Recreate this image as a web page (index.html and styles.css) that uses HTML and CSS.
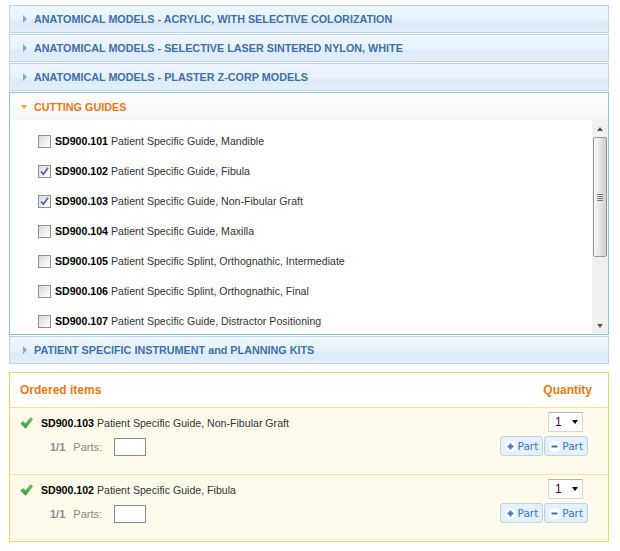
FILE: index.html
```html
<!DOCTYPE html>
<html>
<head>
<meta charset="utf-8">
<link rel="stylesheet" href="styles.css">
</head>
<body>
<div class="wrap">
  <div class="acc-h"><span class="tri-r"></span><span>ANATOMICAL MODELS - ACRYLIC, WITH SELECTIVE COLORIZATION</span></div>
  <div class="acc-h"><span class="tri-r"></span><span>ANATOMICAL MODELS - SELECTIVE LASER SINTERED NYLON, WHITE</span></div>
  <div class="acc-h"><span class="tri-r"></span><span>ANATOMICAL MODELS - PLASTER Z-CORP MODELS</span></div>
  <div class="panel">
    <div class="panel-h"><span class="tri-d"></span><span>CUTTING GUIDES</span></div>
    <div class="panel-b">
      <ul class="list">
        <li><span class="cb"></span><span class="txt"><b>SD900.101</b> Patient Specific Guide, Mandible</span></li>
        <li><span class="cb on"><svg viewBox="0 0 11 11" width="11" height="11"><path d="M2 5.5 L4.3 8.3 L9 1.8" fill="none" stroke="#4b5fa6" stroke-width="1.6"/></svg></span><span class="txt"><b>SD900.102</b> Patient Specific Guide, Fibula</span></li>
        <li><span class="cb on"><svg viewBox="0 0 11 11" width="11" height="11"><path d="M2 5.5 L4.3 8.3 L9 1.8" fill="none" stroke="#4b5fa6" stroke-width="1.6"/></svg></span><span class="txt"><b>SD900.103</b> Patient Specific Guide, Non-Fibular Graft</span></li>
        <li><span class="cb"></span><span class="txt"><b>SD900.104</b> Patient Specific Guide, Maxilla</span></li>
        <li><span class="cb"></span><span class="txt"><b>SD900.105</b> Patient Specific Splint, Orthognathic, Intermediate</span></li>
        <li><span class="cb"></span><span class="txt"><b>SD900.106</b> Patient Specific Splint, Orthognathic, Final</span></li>
        <li><span class="cb"></span><span class="txt"><b>SD900.107</b> Patient Specific Guide, Distractor Positioning</span></li>
      </ul>
      <div class="sb">
        <div class="sb-btn"><span class="up"></span></div>
        <div class="sb-thumb"><span class="grip"></span></div>
        <div class="sb-fill"></div>
        <div class="sb-btn"><span class="down"></span></div>
      </div>
    </div>
  </div>
  <div class="acc-h"><span class="tri-r"></span><span>PATIENT SPECIFIC INSTRUMENT and PLANNING KITS</span></div>

  <div class="order">
    <div class="order-h"><span>Ordered items</span><span>Quantity</span></div>
    <div class="row">
      <div class="left">
        <div class="item"><svg class="ok" viewBox="0 0 13 12" width="13" height="12"><defs><linearGradient id="g1" x1="0" y1="0" x2="0" y2="1"><stop offset="0" stop-color="#7fd66f"/><stop offset="1" stop-color="#1f9a2e"/></linearGradient></defs><path d="M0.8 6.6 L3.2 4.6 L5.4 7.2 L10.6 0.8 L12.4 2.4 L5.5 11.2 Z" fill="url(#g1)" stroke="#2c8a34" stroke-width="0.7"/></svg><span class="txt"><b>SD900.103</b> Patient Specific Guide, Non-Fibular Graft</span></div>
        <div class="parts"><b>1/1</b><span class="pl">Parts:</span><span class="inp"></span></div>
      </div>
      <div class="right">
        <div class="sel"><span class="num">1</span><span class="dd"></span></div>
        <div class="btns">
          <span class="btn"><svg viewBox="0 0 11 11" width="11" height="11"><circle cx="5.5" cy="5.5" r="5.5" fill="#fff"/><path d="M5.5 2.5 V8.5 M2.5 5.5 H8.5" stroke="#3a72b0" stroke-width="2"/></svg>Part</span>
          <span class="btn"><svg viewBox="0 0 11 11" width="11" height="11"><circle cx="5.5" cy="5.5" r="5.5" fill="#fff"/><path d="M2.5 5.5 H8.5" stroke="#3a72b0" stroke-width="2"/></svg>Part</span>
        </div>
      </div>
    </div>
    <div class="row">
      <div class="left">
        <div class="item"><svg class="ok" viewBox="0 0 13 12" width="13" height="12"><defs><linearGradient id="g2" x1="0" y1="0" x2="0" y2="1"><stop offset="0" stop-color="#7fd66f"/><stop offset="1" stop-color="#1f9a2e"/></linearGradient></defs><path d="M0.8 6.6 L3.2 4.6 L5.4 7.2 L10.6 0.8 L12.4 2.4 L5.5 11.2 Z" fill="url(#g2)" stroke="#2c8a34" stroke-width="0.7"/></svg><span class="txt"><b>SD900.102</b> Patient Specific Guide, Fibula</span></div>
        <div class="parts"><b>1/1</b><span class="pl">Parts:</span><span class="inp"></span></div>
      </div>
      <div class="right">
        <div class="sel"><span class="num">1</span><span class="dd"></span></div>
        <div class="btns">
          <span class="btn"><svg viewBox="0 0 11 11" width="11" height="11"><circle cx="5.5" cy="5.5" r="5.5" fill="#fff"/><path d="M5.5 2.5 V8.5 M2.5 5.5 H8.5" stroke="#3a72b0" stroke-width="2"/></svg>Part</span>
          <span class="btn"><svg viewBox="0 0 11 11" width="11" height="11"><circle cx="5.5" cy="5.5" r="5.5" fill="#fff"/><path d="M2.5 5.5 H8.5" stroke="#3a72b0" stroke-width="2"/></svg>Part</span>
        </div>
      </div>
    </div>
  </div>
</div>
</body>
</html>
```

FILE: styles.css
```css
body {
  margin: 0;
  background: #fff;
  font-family: "Liberation Sans", Arial, sans-serif;
  font-size: 10.6px;
  color: #333;
}
.wrap {
  width: 600px;
  margin: 5px 0 0 9px;
  display: flex;
  flex-direction: column;
  gap: 1px;
}
.acc-h {
  height: 26px;
  border: 1px solid #bdd6ee;
  background: linear-gradient(#eef6fe 0%, #e7f2fc 52%, #dcebf9 62%, #e3effb 100%);
  display: flex;
  align-items: center;
  padding-left: 13px;
  color: #3d6fa9;
  font-weight: bold;
  font-size: 10.8px;
}
.tri-r {
  width: 0;
  height: 0;
  border-top: 4px solid transparent;
  border-bottom: 4px solid transparent;
  border-left: 4px solid #7fa8d2;
  margin-right: 7px;
}
.panel {
  border: 1px solid #8ec1ec;
}
.panel-h {
  height: 27px;
  background: linear-gradient(#ffffff, #f3f6f9);
  display: flex;
  align-items: center;
  padding-left: 11px;
  color: #e8790f;
  font-weight: bold;
  font-size: 10.8px;
}
.tri-d {
  width: 0;
  height: 0;
  border-left: 3.5px solid transparent;
  border-right: 3.5px solid transparent;
  border-top: 4px solid #f3a71e;
  margin-right: 7px;
}
.panel-b {
  display: flex;
  height: 214px;
  background: #fff;
}
.list {
  flex: 1;
  margin: 0;
  padding: 6px 0 0 28px;
  list-style: none;
  overflow: hidden;
}
.list li {
  height: 30px;
  display: flex;
  align-items: center;
}
.cb {
  width: 11px;
  height: 11px;
  border: 1px solid #8e8f8f;
  background: linear-gradient(135deg, #d9d9d9, #f4f4f4 70%, #fff);
  margin-right: 4px;
  flex: none;
  display: flex;
}
.txt {
  color: #333;
  white-space: nowrap;
}
.txt b {
  color: #000;
}
.sb {
  width: 16px;
  flex: none;
  background: #f0f0f0;
  display: flex;
  flex-direction: column;
  align-items: center;
}
.sb-btn {
  height: 17px;
  width: 16px;
  display: flex;
  align-items: center;
  justify-content: center;
}
.up {
  width: 0;
  height: 0;
  border-left: 3px solid transparent;
  border-right: 3px solid transparent;
  border-bottom: 4px solid #555;
}
.down {
  width: 0;
  height: 0;
  border-left: 3px solid transparent;
  border-right: 3px solid transparent;
  border-top: 4px solid #555;
}
.sb-thumb {
  width: 12px;
  height: 118px;
  border: 1px solid #999;
  border-radius: 2px;
  background: linear-gradient(to right, #f6f6f6, #e2e2e2 60%, #cfcfcf);
  display: flex;
  align-items: center;
  justify-content: center;
}
.grip {
  width: 6px;
  height: 7px;
  background: repeating-linear-gradient(#777 0 1px, transparent 1px 2px);
}
.sb-fill {
  flex: 1;
}
.order {
  margin-top: 7px;
  border: 1px solid #f8d466;
  background: #fffbea;
}
.order-h {
  height: 34px;
  background: #fff;
  border-bottom: 1px solid #fbe292;
  display: flex;
  justify-content: space-between;
  align-items: center;
  padding: 0 16px 0 10px;
  color: #e8790f;
  font-weight: bold;
  font-size: 12px;
}
.row {
  height: 66px;
  display: flex;
  justify-content: space-between;
  padding: 0 20px 0 10px;
}
.row + .row {
  border-top: 1px solid #fbe292;
}
.item {
  margin-top: 9px;
  height: 12px;
  display: flex;
  align-items: center;
}
.ok {
  margin-right: 8px;
  flex: none;
}
.parts {
  margin-top: 9px;
  padding-left: 30px;
  display: flex;
  align-items: center;
  height: 18px;
  color: #888;
  font-size: 11px;
}
.parts b {
  color: #8a8a8a;
}
.pl {
  margin-left: 8px;
}
.inp {
  margin-left: 12px;
  width: 30px;
  height: 16px;
  border: 1px solid #8a8a8a;
  background: #fff;
}
.right {
  display: flex;
  flex-direction: column;
  align-items: flex-end;
  padding-top: 4px;
}
.sel {
  height: 18px;
  margin-right: 5px;
  border: 1px solid #d6d6d6;
  border-top-color: #b4b4b4;
  background: #fff;
  display: flex;
  align-items: center;
  justify-content: space-between;
  padding: 0 4px 0 6px;
  width: 23px;
}
.num {
  color: #4a004a;
  font-size: 12px;
}
.dd {
  width: 0;
  height: 0;
  border-left: 3.5px solid transparent;
  border-right: 3.5px solid transparent;
  border-top: 4px solid #000;
}
.btns {
  margin-top: 4px;
  display: flex;
  gap: 1px;
}
.btn {
  height: 18px;
  display: inline-flex;
  align-items: center;
  gap: 2px;
  border: 1px solid #b9d5ee;
  border-radius: 3px;
  background: #e4f0fb;
  color: #3b78b8;
  padding: 0 4px 0 4px;
  font-family: "DejaVu Sans", Verdana, sans-serif;
  font-size: 10.5px;
}
```
